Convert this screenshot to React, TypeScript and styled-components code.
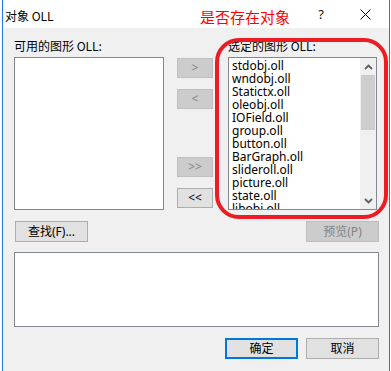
import React from 'react';
import styled, { createGlobalStyle } from 'styled-components';

const GlobalStyle = createGlobalStyle`
  html, body {
    margin: 0;
    padding: 0;
    background: #ffffff;
  }
  body {
    font-family: "Noto Sans", "Noto Sans CJK SC", sans-serif;
    font-size: 12px;
    color: #000000;
  }
`;

const Page = styled.div`
  width: 391px;
  height: 371px;
  overflow: hidden;
  background: #ffffff;
`;

const Window = styled.div`
  position: relative;
  margin-left: 2px;
  width: 388px;
  height: 371px;
  box-sizing: border-box;
  border-left: 1px solid #1883d7;
  border-right: 1px solid #1883d7;
  display: flex;
  flex-direction: column;
`;

const TitleBar = styled.div`
  height: 28px;
  background: #ffffff;
  display: flex;
  align-items: center;
  padding-left: 2px;
  font-family: "Noto Sans CJK SC", sans-serif;
  font-size: 12px;
`;

const TitleText = styled.span`
  flex: 1;
  margin-top: 2px;
`;

const TitleButton = styled.span<{ $w: number }>`
  width: ${p => p.$w}px;
  height: 28px;
  display: flex;
  align-items: center;
  justify-content: center;
  font-size: 13px;
  font-family: "Noto Sans", sans-serif;
  color: #111;
`;

const Body = styled.div`
  flex: 1;
  background: #f0f0f0;
  padding: 12px 9px 0 11px;
  display: flex;
  flex-direction: column;
`;

const TopArea = styled.div`
  display: flex;
  align-items: flex-start;
`;

const Column = styled.div<{ $w: number }>`
  width: ${p => p.$w}px;
  display: flex;
  flex-direction: column;
`;

const Label = styled.div`
  height: 17px;
  line-height: 12px;
  font-family: "Noto Sans CJK SC", sans-serif;
  font-size: 12px;
  white-space: nowrap;
`;

const ListBox = styled.div`
  height: 153px;
  box-sizing: border-box;
  background: #ffffff;
  border: 1px solid #828790;
  display: flex;
  overflow: hidden;
`;

const Items = styled.div`
  flex: 1;
  padding: 1px 0 0 3px;
  overflow: hidden;
`;

const Item = styled.div`
  height: 13px;
  line-height: 13px;
  font-size: 12px;
  white-space: nowrap;
  color: #000;
`;

const ScrollBar = styled.div`
  width: 16px;
  background: #f0f0f0;
  display: flex;
  flex-direction: column;
`;

const Arrow = styled.div`
  height: 17px;
  display: flex;
  align-items: center;
  justify-content: center;
`;

const Thumb = styled.div`
  height: 55px;
  background: #cdcdcd;
  margin: 0 1px;
`;

const Track = styled.div`
  flex: 1;
`;

const MoveButtons = styled.div`
  width: 36px;
  margin: 18px 15px 0 13px;
  display: flex;
  flex-direction: column;
`;

const Btn = styled.button<{ $disabled?: boolean; $default?: boolean; $w?: number; $h?: number }>`
  width: ${p => p.$w ?? 36}px;
  height: ${p => p.$h ?? 20}px;
  box-sizing: border-box;
  padding: 0;
  margin: 0;
  background: ${p => (p.$disabled ? '#cccccc' : '#e1e1e1')};
  border: ${p => (p.$default ? '2px solid #0078d7' : p.$disabled ? '1px solid #bfbfbf' : '1px solid #adadad')};
  color: ${p => (p.$disabled ? '#838383' : '#000000')};
  font-family: "Noto Sans", "Noto Sans CJK SC", sans-serif;
  font-size: 12px;
  line-height: 1;
  display: flex;
  align-items: center;
  justify-content: center;
`;

const Spacer = styled.div<{ $h: number }>`
  height: ${p => p.$h}px;
  flex-shrink: 0;
`;

const ButtonRow = styled.div<{ $top: number; $end?: boolean }>`
  display: flex;
  justify-content: ${p => (p.$end ? 'flex-end' : 'space-between')};
  align-items: center;
  margin-top: ${p => p.$top}px;
  padding-right: 1px;
`;

const RightGroup = styled.div`
  display: flex;
  gap: 8px;
`;

const FindButton = styled(Btn)`
  margin-left: 1px;
`;

const InfoBox = styled.div`
  margin-top: 10px;
  width: 365px;
  height: 75px;
  box-sizing: border-box;
  background: #ffffff;
  border: 1px solid #828790;
`;

const Annotation = styled.div`
  position: absolute;
  left: 197px;
  top: 8px;
  color: #ff0000;
  font-family: "Noto Sans CJK SC", sans-serif;
  font-size: 15px;
  line-height: 18px;
`;

const Highlight = styled.div`
  position: absolute;
  left: 212px;
  top: 38px;
  width: 173px;
  height: 181px;
  box-sizing: border-box;
  border: 4px solid #ed1c24;
  border-radius: 24px;
  pointer-events: none;
`;

const items = [
  'stdobj.oll',
  'wndobj.oll',
  'Statictx.oll',
  'oleobj.oll',
  'IOField.oll',
  'group.oll',
  'button.oll',
  'BarGraph.oll',
  'slideroll.oll',
  'picture.oll',
  'state.oll',
  'libobj.oll',
];

const Chevron = ({ up }: { up?: boolean }) => (
  <svg width="9" height="6" viewBox="0 0 9 6">
    <path
      d={up ? 'M1 5 L4.5 1.5 L8 5' : 'M1 1 L4.5 4.5 L8 1'}
      fill="none"
      stroke="#606060"
      strokeWidth="1.8"
    />
  </svg>
);

const CloseIcon = () => (
  <svg width="11" height="11" viewBox="0 0 11 11">
    <path d="M0.5 0.5 L10.5 10.5 M10.5 0.5 L0.5 10.5" stroke="#000" strokeWidth="1" />
  </svg>
);

export default function App() {
  return (
    <Page>
      <GlobalStyle />
      <Window>
        <TitleBar>
          <TitleText>对象 OLL</TitleText>
          <TitleButton $w={40}>?</TitleButton>
          <TitleButton $w={48}>
            <CloseIcon />
          </TitleButton>
        </TitleBar>
        <Body>
          <TopArea>
            <Column $w={150}>
              <Label>可用的图形 OLL:</Label>
              <ListBox />
            </Column>
            <MoveButtons>
              <Btn $disabled>&gt;</Btn>
              <Spacer $h={11} />
              <Btn $disabled>&lt;</Btn>
              <Spacer $h={48} />
              <Btn $disabled>&gt;&gt;</Btn>
              <Spacer $h={11} />
              <Btn>&lt;&lt;</Btn>
            </MoveButtons>
            <Column $w={149}>
              <Label>选定的图形 OLL:</Label>
              <ListBox>
                <Items>
                  {items.map(i => (
                    <Item key={i}>{i}</Item>
                  ))}
                </Items>
                <ScrollBar>
                  <Arrow>
                    <Chevron up />
                  </Arrow>
                  <Thumb />
                  <Track />
                  <Arrow>
                    <Chevron />
                  </Arrow>
                </ScrollBar>
              </ListBox>
            </Column>
          </TopArea>
          <ButtonRow $top={11}>
            <FindButton $w={73} $h={21}>查找(F)...</FindButton>
            <Btn $disabled $w={73} $h={21}>预览(P)</Btn>
          </ButtonRow>
          <InfoBox />
          <ButtonRow $top={11} $end>
            <RightGroup>
              <Btn $default $w={73} $h={21}>确定</Btn>
              <Btn $w={73} $h={21}>取消</Btn>
            </RightGroup>
          </ButtonRow>
        </Body>
        <Annotation>是否存在对象</Annotation>
        <Highlight />
      </Window>
    </Page>
  );
}
